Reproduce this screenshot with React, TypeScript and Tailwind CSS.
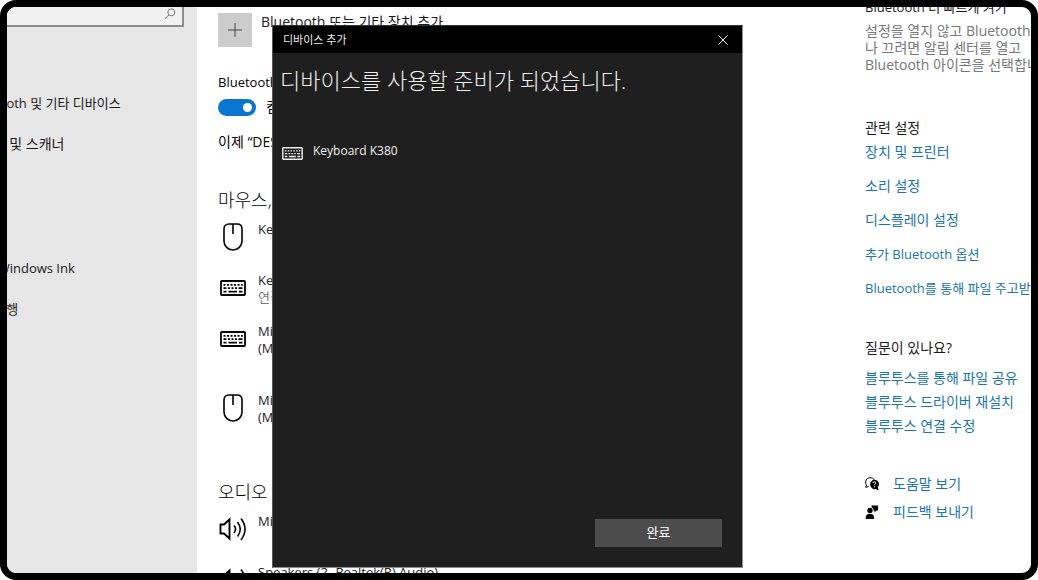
import React, { useState } from 'react';

type IconProps = { className?: string };

const MouseIcon: React.FC<IconProps> = ({ className }) => (
  <svg viewBox="0 0 20 28" className={className} fill="none" stroke="currentColor" strokeWidth="1.6" aria-hidden="true">
    <path d="M1 6C1 3 3 1 6 1h8c3 0 5 2 5 5v12a9 9 0 0 1-18 0z" />
    <path d="M10 1v10" />
  </svg>
);

const KeyboardIcon: React.FC<IconProps> = ({ className }) => (
  <svg viewBox="0 0 26 16" className={className} fill="none" stroke="currentColor" aria-hidden="true">
    <rect x="1" y="1" width="24" height="14" rx="0.8" strokeWidth="1.8" />
    <path
      d="M3.500 4.800h2M7 4.800h2M10.500 4.800h2M14 4.800h2M17.500 4.800h2M21 4.800h1.800M3.500 8.200h3M8 8.200h2M11.500 8.200h2M15 8.200h2M18.500 8.200h4M3.500 11.700h3M8.500 11.700h8.500M19 11.700h3.500"
      strokeWidth="1.7"
    />
  </svg>
);

const SpeakerIcon: React.FC<IconProps> = ({ className }) => (
  <svg viewBox="0 0 28 24" className={className} fill="none" stroke="currentColor" strokeWidth="1.9" aria-hidden="true">
    <path d="M1.500 7.500h3.500L10.500 2.500v19l-5.500-5H1.500z" />
    <path d="M15 8.500q3 3.500 0 7.500M18.500 5q5.500 7 0 14.500M22 1.500q8 10.500 0 21.500" strokeWidth="1.600" />
  </svg>
);

const SearchIcon: React.FC<IconProps> = ({ className }) => (
  <svg viewBox="0 0 12 12" className={className} fill="none" stroke="currentColor" aria-hidden="true">
    <circle cx="7.300" cy="4.300" r="3.500" />
    <path d="M4.800 6.900L.8 11" />
  </svg>
);

const HelpIcon: React.FC<IconProps> = ({ className }) => (
  <svg viewBox="0 0 14 14" className={className} aria-hidden="true">
    <path d="M.8 10.200l.7-2A4.300 4.300 0 1 1 9 2.500" fill="none" stroke="currentColor" />
    <path d="M.6 10.400l3-.9" stroke="currentColor" />
    <path d="M9.200 2.500a4.600 4.600 0 0 1 3.700 7.400l.8 3.500-3-1.300A4.800 4.800 0 1 1 9.200 2.500z" fill="currentColor" />
    <path d="M7.900 6q.2-1.300 1.500-1.300 1.400.1 1.300 1.300-.1.700-1.300 1.600v.7M9.400 9.300v1" fill="none" stroke="white" />
  </svg>
);

const FeedbackIcon: React.FC<IconProps> = ({ className }) => (
  <svg viewBox="0 0 14 14" className={className} fill="currentColor" aria-hidden="true">
    <circle cx="5" cy="5.500" r="2.700" />
    <path d="M.8 14v-1.500Q.8 9 4 9h2q3 0 3 3.500V14zM6.500.5H13v5h-1.500L9.500 7.500v-2h-1Q8.500 3 6.500 2z" />
  </svg>
);

interface Device {
  icon: React.FC<IconProps>;
  iconClass: string;
  rowClass: string;
  lines: string[];
  status?: string;
}

const inputDevices: Device[] = [
  { icon: MouseIcon, iconClass: 'w-5 h-7', rowClass: 'min-h-[34px]', lines: ['Keyboard K380'] },
  { icon: KeyboardIcon, iconClass: 'w-[26px] h-4', rowClass: 'min-h-[34px]', lines: ['Keyboard K380'], status: '연결됨' },
  { icon: KeyboardIcon, iconClass: 'w-[26px] h-4', rowClass: 'min-h-[52px]', lines: ['Microsoft', '(Microsoft)'] },
  { icon: MouseIcon, iconClass: 'w-5 h-7', rowClass: 'min-h-[52px]', lines: ['Microsoft', '(Microsoft)'] },
];

const audioDevices: Device[] = [
  { icon: SpeakerIcon, iconClass: 'w-7 h-6', rowClass: 'min-h-[34px]', lines: ['Microphone'] },
  { icon: SpeakerIcon, iconClass: 'w-7 h-6', rowClass: 'min-h-[34px]', lines: ['Speakers (2- Realtek(R) Audio)'] },
];

const relatedLinks = [
  { label: '장치 및 프린터', size: 'text-sm' },
  { label: '소리 설정', size: 'text-sm' },
  { label: '디스플레이 설정', size: 'text-sm' },
  { label: '추가 Bluetooth 옵션', size: 'text-[13px]' },
  { label: 'Bluetooth를 통해 파일 주고받기', size: 'text-[13px]' },
];

const questionLinks = ['블루투스를 통해 파일 공유', '블루투스 드라이버 재설치', '블루투스 연결 수정'];

const DeviceSection: React.FC<{ title: string; devices: Device[] }> = ({ title, devices }) => (
  <section className="mt-9">
    <h2 className="text-lg leading-6 font-light">{title}</h2>
    <ul className="mt-[9px] flex flex-col gap-[17px]">
      {devices.map((device, i) => (
        <li key={i} className={`flex items-start gap-2.5 ${device.rowClass}`}>
          <span className="flex items-center justify-center w-[30px] h-8 shrink-0">
            <device.icon className={device.iconClass} />
          </span>
          <div className="text-[13px] leading-[17px] text-[#222]">
            {device.lines.map((line) => (
              <p key={line}>{line}</p>
            ))}
            {device.status && <p className="text-[#777]">{device.status}</p>}
          </div>
        </li>
      ))}
    </ul>
  </section>
);

const Sidebar = () => (
  <aside className="w-[190px] shrink-0 overflow-hidden bg-[#e6e6e6]">
    <div className="flex items-start h-5 w-[177px] pr-1.5 bg-[#f1f1f1] border-r-2 border-b-2 border-[#8c8c8c]">
      <input type="search" aria-label="설정 찾기" className="min-w-0 h-4 flex-1 bg-transparent outline-none text-sm" />
      <SearchIcon className="size-3 mt-px shrink-0 text-[#777]" />
    </div>
    {/* 왼쪽으로 스크롤된 메뉴 */}
    <nav className="-ml-10 mt-[66px] flex flex-col text-[#1a1a1a] leading-5 whitespace-nowrap">
      <a href="#bluetooth" className="text-[13px]">Bluetooth 및 기타 디바이스</a>
      <a href="#printers" className="mt-[21px] text-sm">프린터 및 스캐너</a>
      <a href="#ink" className="mt-[104px] text-[13px]">펜 및 Windows Ink</a>
      <a href="#autoplay" className="mt-[21px] text-[13px]">자동 실행</a>
    </nav>
  </aside>
);

const RelatedPanel = () => (
  <aside className="w-[166px] shrink-0 text-sm leading-5 text-[#1a1a1a] whitespace-nowrap">
    <h3 className="-mt-2 text-[13px] leading-4">Bluetooth 더 빠르게 켜기</h3>
    <p className="mt-[7px] leading-[17px] text-[#777]">
      설정을 열지 않고 Bluetooth를 켜거
      <br />
      나 끄려면 알림 센터를 열고
      <br />
      Bluetooth 아이콘을 선택합니다.
    </p>

    <h3 className="mt-[45px]">관련 설정</h3>
    <ul className="mt-1 flex flex-col gap-3.5 text-[#1b74ae]">
      {relatedLinks.map((link) => (
        <li key={link.label} className="h-5">
          <a href="#related" className={link.size}>{link.label}</a>
        </li>
      ))}
    </ul>

    <h3 className="mt-10">질문이 있나요?</h3>
    <ul className="mt-2.5 flex flex-col gap-1 text-[#1b74ae]">
      {questionLinks.map((label) => (
        <li key={label}>
          <a href="#question">{label}</a>
        </li>
      ))}
    </ul>

    <ul className="mt-[38px] flex flex-col gap-2 text-[#1b74ae]">
      <li className="flex items-center gap-3.5">
        <HelpIcon className="size-3.5 text-black" />
        <a href="#help">도움말 보기</a>
      </li>
      <li className="flex items-center gap-3.5">
        <FeedbackIcon className="size-3.5 text-black" />
        <a href="#feedback">피드백 보내기</a>
      </li>
    </ul>
  </aside>
);

const AddDeviceDialog: React.FC<{ onClose: () => void }> = ({ onClose }) => (
  <div
    role="dialog"
    aria-labelledby="dialog-title"
    className="absolute top-[18px] bottom-[5px] left-[265px] w-[471px] flex flex-col bg-[#1f1f1f] text-[#eee] border border-t-[#333] border-l-[#555] border-r-[#8c8c8c] border-b-[#8c8c8c]"
  >
    <header className="flex items-center justify-between h-[27px] pl-2.5 pr-3.5 bg-black">
      <span id="dialog-title" className="text-[11px] leading-4">디바이스 추가</span>
      <button onClick={onClose} aria-label="닫기" className="cursor-pointer">
        <svg viewBox="0 0 10 10" className="size-2.5" fill="none" stroke="currentColor">
          <path d="M.5.5l9 9M9.500.5l-9 9" />
        </svg>
      </button>
    </header>
    <h1 className="mt-[11px] pl-[7px] text-[22px] leading-8 font-light">디바이스를 사용할 준비가 되었습니다.</h1>
    <div className="flex items-start gap-2.5 mt-[47px] pl-[9px]">
      <KeyboardIcon className="w-[21px] h-[13px] mt-1" />
      <span className="text-xs leading-4">Keyboard K380</span>
    </div>
    <button
      onClick={onClose}
      className="mt-auto ml-auto mr-5 mb-5 w-[127px] h-7 bg-[#4c4c4c] text-[13px] text-white cursor-pointer"
    >
      완료
    </button>
  </div>
);

export default function App() {
  const [open, setOpen] = useState(true);
  const [bluetoothOn, setBluetoothOn] = useState(true);

  return (
    <div className="relative flex h-screen overflow-hidden rounded-2xl border-[7px] border-black bg-white text-black font-['Open_Sans','Noto_Sans_CJK_KR',sans-serif]">
      <Sidebar />

      <main className="min-w-0 flex-1 pl-[21px] pt-1.5">
        <button onClick={() => setOpen(true)} className="flex items-start gap-[9px] text-sm leading-[18px] cursor-pointer">
          <span className="flex items-center justify-center size-[34px] bg-[#ccc]">
            <svg viewBox="0 0 14 14" className="size-3.5" stroke="#444" aria-hidden="true">
              <path d="M7 0v14M0 7h14" />
            </svg>
          </span>
          <span className="text-[#1a1a1a]">Bluetooth 또는 기타 장치 추가</span>
        </button>

        <label htmlFor="bluetooth-toggle" className="block mt-[27px] text-[13px] leading-4">Bluetooth</label>
        <div className="flex items-center gap-2.5 mt-2 text-sm leading-[18px]">
          <input
            id="bluetooth-toggle"
            type="checkbox"
            checked={bluetoothOn}
            onChange={(e) => setBluetoothOn(e.target.checked)}
            className="appearance-none flex items-center justify-start checked:justify-end w-[38px] h-[17px] px-1 rounded-full bg-gray-400 checked:bg-[#0a74cf] before:size-[9px] before:rounded-full before:bg-white cursor-pointer"
          />
          <span>{bluetoothOn ? '켬' : '끔'}</span>
        </div>
        <p className="mt-[18px] mb-[38px] text-sm leading-4">이제 “DESKTOP”</p>

        <DeviceSection title="마우스, 키보드 및 펜" devices={inputDevices} />
        <DeviceSection title="오디오" devices={audioDevices} />
      </main>

      <RelatedPanel />

      {open && <AddDeviceDialog onClose={() => setOpen(false)} />}
    </div>
  );
}
